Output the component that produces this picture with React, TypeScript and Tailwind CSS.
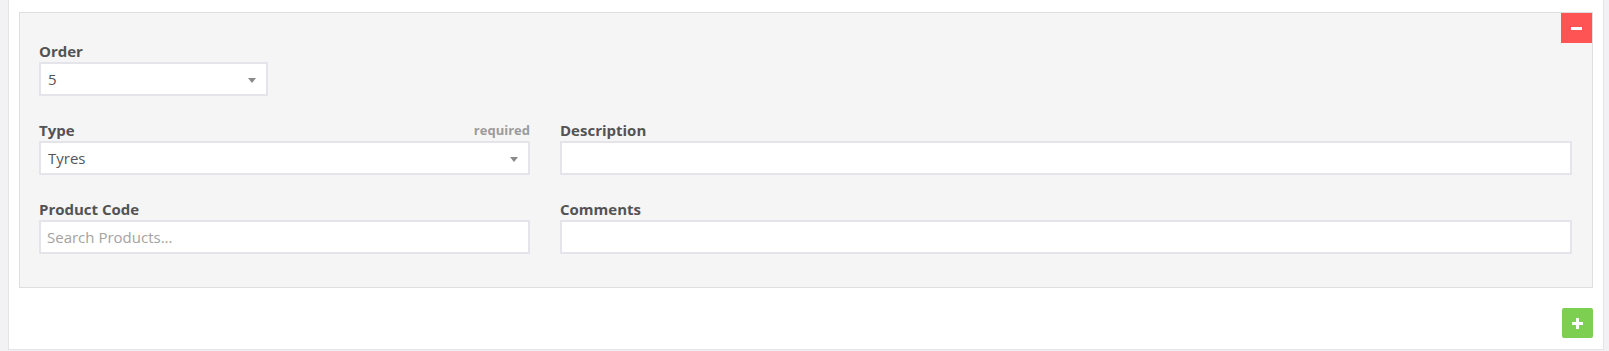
function Label({ children, hint }: { children: string; hint?: string }) {
  return (
    <div className="flex h-[20px] items-end justify-between mb-[1px] leading-[20px]">
      <span className="text-[15px] font-bold text-[#535353]">{children}</span>
      {hint && <span className="text-[13px] font-bold text-[#9b9b9b]">{hint}</span>}
    </div>
  );
}

function SelectBox({ value, className = "" }: { value: string; className?: string }) {
  return (
    <div
      className={`relative flex h-[34px] items-center border-2 border-[#e4e4ea] bg-white pl-[7px] text-[15px] text-[#555] ${className}`}
    >
      <span>{value}</span>
      <span className="absolute right-[10px] top-[14px] h-0 w-0 border-x-[4px] border-t-[5px] border-x-transparent border-t-[#8a8a8a]" />
    </div>
  );
}

function TextBox({ placeholder = "" }: { placeholder?: string }) {
  return (
    <div className="flex h-[34px] items-center border-2 border-[#e4e4ea] bg-white pl-[6px] text-[15px] text-[#a3a3a3]">
      {placeholder}
    </div>
  );
}

export default function App() {
  return (
    <div
      className="h-[351px] w-[1609px] bg-[#f2f2f4]"
      style={{ fontFamily: '"Open Sans", "Liberation Sans", sans-serif' }}
    >
      <div className="ml-[8px] h-[350px] w-[1596px] border-x border-b border-[#e3e3e8] bg-white px-[10px] pt-[12px]">
        {/* line item card */}
        <div className="relative border border-[#dedede] bg-[#f5f5f5] pb-[33px] pl-[19px] pr-[20px] pt-[28px]">
          <button className="absolute right-0 top-0 flex h-[30px] w-[31px] items-center justify-center bg-[#ff5454]">
            <span className="h-[3px] w-[11px] bg-white" />
          </button>

          <div className="mb-[24px] w-[229px]">
            <Label>Order</Label>
            <SelectBox value="5" />
          </div>

          <div className="flex gap-[30px]">
            <div className="w-[491px]">
              <div className="mb-[24px]">
                <Label hint="required">Type</Label>
                <SelectBox value="Tyres" />
              </div>
              <div>
                <Label>Product Code</Label>
                <TextBox placeholder="Search Products..." />
              </div>
            </div>
            <div className="flex-1">
              <div className="mb-[24px]">
                <Label>Description</Label>
                <TextBox />
              </div>
              <div>
                <Label>Comments</Label>
                <TextBox />
              </div>
            </div>
          </div>
        </div>

        <div className="mt-[20px] flex justify-end">
          <button className="relative flex h-[30px] w-[31px] items-center justify-center rounded-[2px] bg-[#7ccf50]">
            <span className="absolute h-[3px] w-[11px] bg-white" />
            <span className="absolute h-[11px] w-[3px] bg-white" />
          </button>
        </div>
      </div>
    </div>
  );
}
